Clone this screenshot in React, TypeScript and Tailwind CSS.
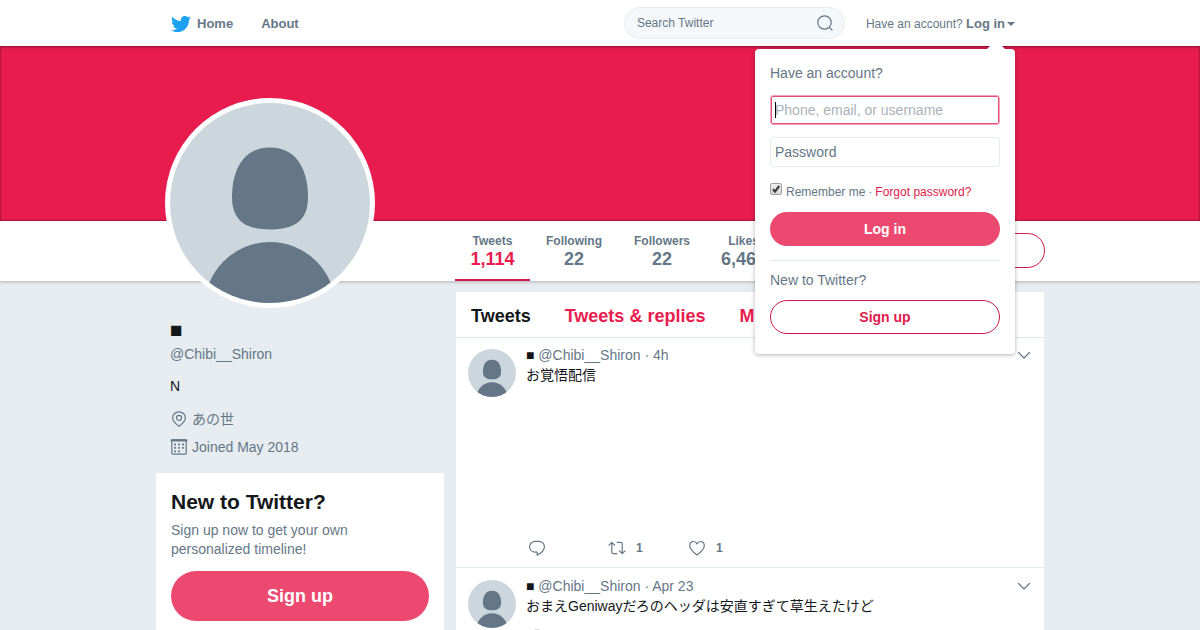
import type { ReactNode } from "react";
import { FaTwitter } from "react-icons/fa";

const STATS = [
  { label: "Tweets", value: "1,114", active: true },
  { label: "Following", value: "22", active: false },
  { label: "Followers", value: "22", active: false },
  { label: "Likes", value: "6,466", active: false },
];

const TWEETS = [
  { id: 1, time: "4h", text: "お覚悟配信", media: true, retweets: 1, likes: 1 },
  { id: 2, time: "Apr 23", text: "おまえGeniwayだろのヘッダは安直すぎて草生えたけど", media: false, retweets: 0, likes: 0 },
];

function Avatar({ className }: { className: string }) {
  return (
    <svg viewBox="0 0 200 200" className={`rounded-full bg-[#ccd6dd] ${className}`} aria-hidden="true">
      <path
        fill="#657786"
        d="M100 44.5C130 44.5 138 72 138 94C138 118 124 126.5 100 126.5C76 126.5 62 118 62 94C62 72 70 44.5 100 44.5Z"
      />
      <circle cx="100" cy="204.5" r="65.5" fill="#657786" />
    </svg>
  );
}

function Icon({ children, className = "size-[18px]" }: { children: ReactNode; className?: string }) {
  return (
    <svg
      viewBox="0 0 18 18"
      className={`shrink-0 ${className}`}
      fill="none"
      stroke="currentColor"
      strokeWidth="1.2"
      strokeLinecap="round"
      strokeLinejoin="round"
      aria-hidden="true"
    >
      {children}
    </svg>
  );
}

function Action({ label, count, children }: { label: string; count?: number; children: ReactNode }) {
  return (
    <button aria-label={label} className="flex w-20 items-center gap-[10px] text-xs font-bold">
      <Icon>{children}</Icon>
      {count ? <span>{count}</span> : null}
    </button>
  );
}

function LoginMenu() {
  return (
    <div className="absolute top-[39px] right-0 w-[260px] rounded bg-white px-[15px] pt-[15px] pb-5 text-sm leading-[18px] shadow-[0_1px_4px_rgba(0,0,0,0.3)]">
      <svg viewBox="0 0 20 10" className="absolute -top-[9px] right-[9px] h-[10px] w-5" aria-hidden="true">
        <path d="M0 10L10 0L20 10Z" fill="#fff" />
      </svg>
      <p>Have an account?</p>
      <form onSubmit={(e) => e.preventDefault()}>
        <div className="relative mt-[13px]">
          <input
            autoFocus
            type="text"
            aria-label="Phone, email, or username"
            placeholder="Phone, email, or username"
            className="peer block h-[30px] w-full rounded-[3px] border border-[#e6ecf0] px-1 text-[#14171a] caret-black outline-none placeholder:text-[#657786] placeholder-shown:caret-transparent focus:border-[#f3a4b9] focus:shadow-[inset_0_0_0_1px_#e4507a] focus:placeholder:text-[#aab2ba]"
          />
          {/* steady caret while the field is still empty */}
          <span className="absolute top-[7px] left-[5px] hidden h-4 w-px bg-black peer-[:focus:placeholder-shown]:block" />
        </div>
        <input
          type="password"
          aria-label="Password"
          placeholder="Password"
          className="mt-3 block h-[30px] w-full rounded-[3px] border border-[#e6ecf0] px-1 text-[#14171a] outline-none placeholder:text-[#657786]"
        />
        <div className="mt-[15px] flex h-5 items-center text-xs">
          <label className="flex items-center gap-1">
            <span className="relative mb-[6px] size-3">
              <input
                type="checkbox"
                defaultChecked
                className="peer block size-3 appearance-none rounded-[2px] border border-[#a0a0a0] bg-linear-to-b from-[#eee] to-[#d8d8d8]"
              />
              <svg viewBox="0 0 12 12" className="pointer-events-none absolute inset-0 hidden size-3 peer-checked:block">
                <path d="M3 6.2L5 8.6L9.2 3" fill="none" stroke="#3b3b3b" strokeWidth="2.2" />
              </svg>
            </span>
            Remember me
          </label>
          <span className="px-[3px]">·</span>
          <a href="#" className="text-[#e01b4c]">Forgot password?</a>
        </div>
        <button className="mt-[10px] h-[34px] w-full rounded-full bg-[#ec4971] font-bold text-white">Log in</button>
      </form>
      <p className="mt-[14px] border-t border-[#e1e8ed] pt-[10px]">New to Twitter?</p>
      <button className="mt-[11px] h-[34px] w-full rounded-full border border-[#d01948] font-bold text-[#e01b4c]">
        Sign up
      </button>
    </div>
  );
}

function Header() {
  return (
    <header className="relative z-20 bg-white shadow-[0_1px_3px_rgba(0,0,0,0.25)]">
      <div className="mx-auto flex h-[46px] max-w-[890px] items-center pr-[30px] pl-4">
        <nav className="flex items-center gap-7 pt-px text-[13px] font-bold">
          <a href="#" className="flex items-center gap-[6px]">
            <FaTwitter className="size-5 text-[#1da1f2]" />
            Home
          </a>
          <a href="#">About</a>
        </nav>
        <form className="relative ml-auto" onSubmit={(e) => e.preventDefault()}>
          <input
            type="text"
            aria-label="Search Twitter"
            placeholder="Search Twitter"
            className="block h-8 w-[221px] rounded-full border border-[#e6ecf0] bg-[#f5f8fa] pr-8 pl-3 text-xs outline-none placeholder:text-[#657786]"
          />
          <button aria-label="Search" className="absolute top-[7px] right-[11px]">
            <Icon>
              <circle cx="8.5" cy="8.5" r="6.7" />
              <path d="M13.4 13.4L16 16" />
            </Icon>
          </button>
        </form>
        <div className="relative ml-[21px] pt-[2px]">
          <button className="flex items-center text-xs leading-6">
            <span>
              Have an account? <b className="text-[13px]">Log in</b>
            </span>
            <svg viewBox="0 0 8 4" className="ml-[2px] h-1 w-2" aria-hidden="true">
              <path d="M0 0H8L4 4Z" fill="currentColor" />
            </svg>
          </button>
          <LoginMenu />
        </div>
      </div>
    </header>
  );
}

function ProfileNav() {
  return (
    <div className="relative z-10 bg-white shadow-[0_1px_3px_rgba(0,0,0,0.25)]">
      <div className="relative mx-auto flex h-[60px] max-w-[890px] items-center pl-[300px]">
        <div className="absolute bottom-[-27px] left-[10px] rounded-full bg-white p-[5px]">
          <Avatar className="size-[200px]" />
        </div>
        {STATS.map((stat) => (
          <a
            key={stat.label}
            href="#"
            className={`flex h-full flex-col items-center border-b-2 pt-3 font-bold ${
              stat.label.startsWith("Follow") ? "w-[88px]" : "w-[75px]"
            } ${stat.active ? "border-[#d01948]" : "border-transparent"}`}
          >
            <span className="text-xs leading-4">{stat.label}</span>
            <span className={`text-lg leading-5 ${stat.active ? "text-[#e81c4f]" : ""}`}>{stat.value}</span>
          </a>
        ))}
        <button className="mb-[2px] ml-auto h-[35px] w-[160px] rounded-full border border-[#d01948] text-sm font-bold text-[#e01b4c]">
          Follow
        </button>
      </div>
    </div>
  );
}

function Sidebar() {
  return (
    <aside className="w-[288px] shrink-0 pt-6">
      <div className="px-[14px] text-sm leading-5">
        <h1 className="text-[21px] leading-7 font-bold text-[#14171a]">■</h1>
        <p>@Chibi__Shiron</p>
        <p className="mt-3 text-[#14171a]">N</p>
        <p className="mt-[13px] flex items-center gap-1">
          <Icon>
            <path d="M9 16.2C6 14 2.6 11.4 2.6 7.9C2.6 4.4 5.4 1.8 9 1.8S15.4 4.4 15.4 7.9C15.4 11.4 12 14 9 16.2Z" />
            <circle cx="9" cy="7.9" r="2.5" />
          </Icon>
          あの世
        </p>
        <p className="mt-2 flex items-center gap-1">
          <Icon>
            <rect x="1.8" y="1.8" width="14.4" height="14.4" rx="1" />
            <path d="M1.8 2.4H16.2" strokeWidth="2.4" />
            <path
              d="M4.2 6.5H14M4.2 9.9H14M4.2 13.3H10.2"
              strokeWidth="1.8"
              strokeLinecap="butt"
              strokeDasharray="1.8 2.1"
            />
          </Icon>
          Joined May 2018
        </p>
      </div>
      <section className="mt-4 bg-white p-[15px]">
        <h2 className="text-[21px] leading-7 font-bold text-[#14171a]">New to Twitter?</h2>
        <p className="mt-[5px] text-sm leading-[19px]">Sign up now to get your own personalized timeline!</p>
        <button className="mt-3 h-[50px] w-full rounded-full bg-[#ec4971] text-lg font-bold text-white">Sign up</button>
      </section>
    </aside>
  );
}

function Tweet({ tweet }: { tweet: (typeof TWEETS)[number] }) {
  return (
    <article className="flex gap-[10px] border-b border-[#e1e8ed] px-3 pt-[7px] pb-[10px]">
      <Avatar className="mt-1 size-12 shrink-0" />
      <div className="min-w-0 flex-1 text-sm leading-5">
        <div className="flex h-5 items-center justify-between">
          <p>
            <b className="text-[#14171a]">■</b> @Chibi__Shiron · {tweet.time}
          </p>
          <button aria-label="More">
            <Icon className="-mr-px size-[18px]">
              <path d="M3.5 6.5L9 12L14.5 6.5" />
            </Icon>
          </button>
        </div>
        <p className="text-[#14171a]">{tweet.text}</p>
        {tweet.media && <div className="h-[142px]" />}
        <div className="mt-3 flex pl-[2px]">
          <Action label="Reply">
            <path d="M9.2 13.2V16.2C12.6 14.4 16.4 11.6 16.4 7.7C16.4 4.6 14 2.4 10.8 2.4H7.2C4 2.4 1.6 4.8 1.6 7.8C1.6 10.9 4 13.2 7.2 13.2Z" />
          </Action>
          <Action label="Retweet" count={tweet.retweets}>
            <path d="M1 6.2L3.8 3.3L6.6 6.2M3.8 3.5V13.2Q3.8 14.7 5.3 14.7H8.8M17 11.8L14.2 14.7L11.4 11.8M14.2 14.5V4.8Q14.2 3.3 12.7 3.3H9.2" />
          </Action>
          <Action label="Like" count={tweet.likes}>
            <path d="M9 16C5 13.2 1.7 10 1.7 6.6C1.7 4.2 3.4 2.5 5.5 2.5C7.2 2.5 8.4 3.6 9 5C9.6 3.6 10.8 2.5 12.5 2.5C14.6 2.5 16.3 4.2 16.3 6.6C16.3 10 13 13.2 9 16Z" />
          </Action>
        </div>
      </div>
    </article>
  );
}

export default function App() {
  return (
    <div className="h-screen overflow-x-hidden overflow-y-auto bg-[#e6ecf0] font-['Liberation_Sans','Noto_Sans_CJK_JP',sans-serif] text-[#657786] [scrollbar-width:none]">
      <Header />
      <div className="h-[175px] bg-[#e81c4f] shadow-[inset_0_0_2px_rgba(0,0,0,0.7)]" />
      <ProfileNav />
      <main className="mx-auto flex max-w-[888px] gap-3 pt-[11px]">
        <Sidebar />
        <section className="min-w-0 flex-1 bg-white">
          <nav className="flex h-[46px] items-center gap-[34px] border-b border-[#e1e8ed] px-[15px] pt-[2px] text-lg font-bold text-[#e81c4f]">
            <a href="#" className="text-[#14171a]">Tweets</a>
            <a href="#">Tweets &amp; replies</a>
            <a href="#">Media</a>
          </nav>
          <div className="flex flex-col gap-px">
            {TWEETS.map((tweet) => (
              <Tweet key={tweet.id} tweet={tweet} />
            ))}
          </div>
        </section>
      </main>
    </div>
  );
}
